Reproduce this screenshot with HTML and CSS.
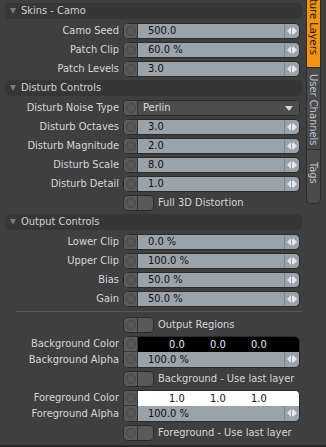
FILE: index.html
```html
<!DOCTYPE html>
<html lang="en">
<head>
    <meta charset="UTF-8">
    <title>Skins - Camo</title>
    <link rel="stylesheet" href="styles.css">
</head>
<body>
    <div class="window">
        <!-- Properties panel -->
        <div class="panel">

            <div class="section">Skins - Camo</div>
            <div class="row"><span class="label">Camo Seed</span><div class="field"><span class="knob"></span><span class="value">500.0</span><span class="spin"></span></div></div>
            <div class="row"><span class="label">Patch Clip</span><div class="field"><span class="knob"></span><span class="value">60.0 %</span><span class="spin"></span></div></div>
            <div class="row"><span class="label">Patch Levels</span><div class="field"><span class="knob"></span><span class="value">3.0</span><span class="spin"></span></div></div>

            <div class="section">Disturb Controls</div>
            <div class="row"><span class="label">Disturb Noise Type</span><div class="field"><span class="knob"></span><span class="value popup">Perlin<i class="caret"></i></span></div></div>
            <div class="row"><span class="label">Disturb Octaves</span><div class="field"><span class="knob"></span><span class="value">3.0</span><span class="spin"></span></div></div>
            <div class="row"><span class="label">Disturb Magnitude</span><div class="field"><span class="knob"></span><span class="value">2.0</span><span class="spin"></span></div></div>
            <div class="row"><span class="label">Disturb Scale</span><div class="field"><span class="knob"></span><span class="value">8.0</span><span class="spin"></span></div></div>
            <div class="row"><span class="label">Disturb Detail</span><div class="field"><span class="knob"></span><span class="value">1.0</span><span class="spin"></span></div></div>
            <div class="row"><span class="label"></span><div class="check"><span class="toggle"><span class="knob"></span><span class="box"></span></span>Full 3D Distortion</div></div>

            <div class="section">Output Controls</div>
            <div class="row"><span class="label">Lower Clip</span><div class="field"><span class="knob"></span><span class="value">0.0 %</span><span class="spin"></span></div></div>
            <div class="row"><span class="label">Upper Clip</span><div class="field"><span class="knob"></span><span class="value">100.0 %</span><span class="spin"></span></div></div>
            <div class="row"><span class="label">Bias</span><div class="field"><span class="knob"></span><span class="value">50.0 %</span><span class="spin"></span></div></div>
            <div class="row"><span class="label">Gain</span><div class="field"><span class="knob"></span><span class="value">50.0 %</span><span class="spin"></span></div></div>

            <div class="divider"></div>

            <div class="row"><span class="label"></span><div class="check"><span class="toggle"><span class="knob"></span><span class="box"></span></span>Output Regions</div></div>

            <!-- Background colour + alpha -->
            <div class="pair">
                <div class="labels"><span class="label">Background Color</span><span class="label">Background Alpha</span></div>
                <div class="field tall">
                    <div class="knobs"><span class="knob"></span><span class="knob"></span></div>
                    <div class="stack">
                        <div class="color black"><span>0.0</span><span>0.0</span><span>0.0</span></div>
                        <div class="line"><span class="value">100.0 %</span><span class="spin"></span></div>
                    </div>
                </div>
            </div>
            <div class="row"><span class="label"></span><div class="check"><span class="toggle"><span class="knob"></span><span class="box"></span></span>Background - Use last layer</div></div>

            <!-- Foreground colour + alpha -->
            <div class="pair">
                <div class="labels"><span class="label">Foreground Color</span><span class="label">Foreground Alpha</span></div>
                <div class="field tall">
                    <div class="knobs"><span class="knob"></span><span class="knob"></span></div>
                    <div class="stack">
                        <div class="color white"><span>1.0</span><span>1.0</span><span>1.0</span></div>
                        <div class="line"><span class="value">100.0 %</span><span class="spin"></span></div>
                    </div>
                </div>
            </div>
            <div class="row"><span class="label"></span><div class="check"><span class="toggle"><span class="knob"></span><span class="box"></span></span>Foreground - Use last layer</div></div>
        </div>

        <!-- Side tabs -->
        <div class="tabs">
            <div class="tab active">Texture Layers</div>
            <div class="tab">User Channels</div>
            <div class="tab last">Tags</div>
        </div>
    </div>
</body>
</html>
```

FILE: styles.css
```css
/* Reset */
* {
    margin: 0;
    padding: 0;
    box-sizing: border-box;
}

body {
    width: 326px;
    height: 447px;
    overflow: hidden;
    background: #3f3f3f;
    font-family: 'DejaVu Sans Condensed', 'DejaVu Sans', sans-serif;
    font-size: 11px;
    color: #d3d7db;
}

.window {
    display: flex;
    height: 447px;
    border-bottom: 2px solid #262626;
}

/* Panel */
.panel {
    width: 303px;
    padding: 3px 1px 0 5px;
}

.section {
    height: 16px;
    line-height: 16px;
    background: #363636;
    border-radius: 5px;
    padding-left: 16px;
    position: relative;
    color: #cfd2d5;
    margin-bottom: 4px;
}

.section::before {
    content: '';
    position: absolute;
    left: 5px;
    top: 5px;
    border-left: 3px solid transparent;
    border-right: 3px solid transparent;
    border-top: 6px solid #7a7a7a;
}

.row {
    display: grid;
    grid-template-columns: 114px 177px;
    column-gap: 4px;
    height: 16px;
    margin-bottom: 3px;
}

.label {
    text-align: right;
    line-height: 16px;
    white-space: nowrap;
}

/* Value field */
.field {
    display: flex;
    height: 16px;
    border: 1px solid #2a2a2a;
    border-radius: 5px;
    overflow: hidden;
    background: #9aa2aa;
}

.knob {
    width: 14px;
    flex: none;
    background: #5a5a5a;
    border-right: 1px solid #343434;
    position: relative;
}

.knob::after {
    content: '';
    position: absolute;
    left: 2px;
    top: 2px;
    width: 8px;
    height: 8px;
    border: 1px solid #474747;
    border-radius: 50%;
    background: #575757;
}

.value {
    flex: 1;
    padding-left: 10px;
    line-height: 14px;
    color: #111;
    white-space: nowrap;
}

.value.popup {
    background: #4c4c4c;
    color: #dcdcdc;
    padding-left: 5px;
    position: relative;
}

.caret {
    position: absolute;
    right: 6px;
    top: 5px;
    border-left: 4px solid transparent;
    border-right: 4px solid transparent;
    border-top: 5px solid #d8d8d8;
}

.spin {
    width: 15px;
    flex: none;
    border-left: 1px solid #7e858c;
    position: relative;
}

.spin::before,
.spin::after {
    content: '';
    position: absolute;
    top: 3px;
    border-top: 4px solid transparent;
    border-bottom: 4px solid transparent;
}

.spin::before {
    left: 2px;
    border-right: 4px solid #e2e6ea;
}

.spin::after {
    left: 8px;
    border-left: 4px solid #e2e6ea;
    box-shadow: -2px 0 0 -1px #e2e6ea;
}

/* Checkbox toggles */
.check {
    display: flex;
    align-items: center;
    gap: 4px;
    line-height: 16px;
    white-space: nowrap;
}

.toggle {
    display: flex;
    width: 31px;
    height: 16px;
    border: 1px solid #2a2a2a;
    border-radius: 5px;
    overflow: hidden;
}

.toggle .box {
    flex: 1;
    background: #595959;
}

.divider {
    height: 1px;
    background: #575757;
    margin: 4px 0 5px 11px;
}

/* Colour + alpha pairs */
.pair {
    display: grid;
    grid-template-columns: 114px 177px;
    column-gap: 4px;
    margin-bottom: 3px;
}

.labels {
    display: flex;
    flex-direction: column;
}

.field.tall {
    height: 32px;
}

.knobs {
    display: flex;
    flex-direction: column;
}

.knobs .knob {
    height: 15px;
}

.knobs .knob:first-child {
    border-bottom: 1px solid #3a3a3a;
}

.stack {
    flex: 1;
    display: flex;
    flex-direction: column;
}

.color {
    height: 15px;
    display: flex;
    line-height: 15px;
    padding-left: 31px;
}

.color span {
    width: 41px;
}

.color.black {
    background: #000;
    color: #e8e8e8;
}

.color.white {
    background: #fff;
    color: #111;
}

.line {
    flex: 1;
    display: flex;
}

.line .value {
    line-height: 15px;
}

/* Side tabs */
.tabs {
    width: 23px;
    padding-left: 3px;
    display: flex;
    flex-direction: column;
    margin-top: -24px;
}

.tab {
    width: 15px;
    flex: none;
    writing-mode: vertical-rl;
    background: #4a4a4a;
    border: 1px solid #2c2c2c;
    border-top: none;
    color: #b8c3ce;
    line-height: 13px;
    padding-top: 6px;
    height: 82px;
    white-space: nowrap;
}

.tab.active {
    background: #f39314;
    color: #1a1a1a;
    padding-top: 7px;
    height: 92px;
}

.tab.last {
    padding-top: 12px;
    height: 54px;
    border-bottom-left-radius: 5px;
    border-bottom-right-radius: 5px;
}
```
